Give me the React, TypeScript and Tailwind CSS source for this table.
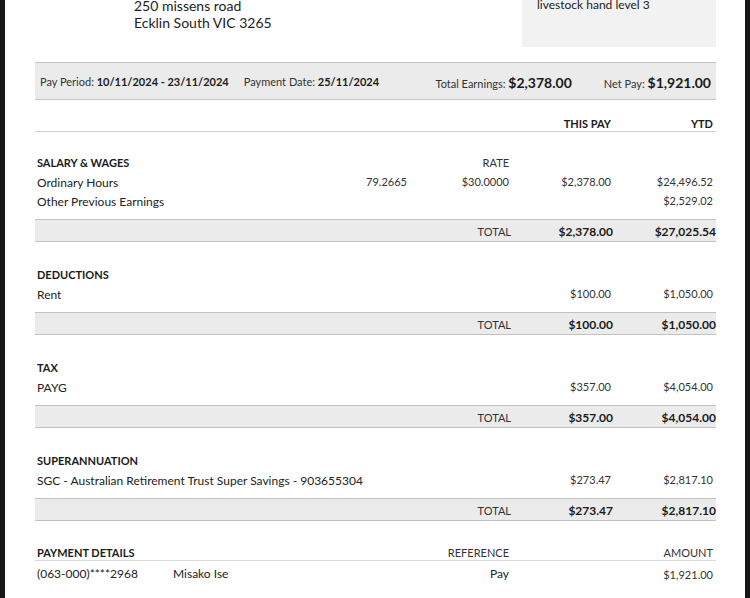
import React from "react";

const F = { fontFamily: "Lato, 'Noto Sans', sans-serif" };

type Item = { label: string; hours?: string; rate?: string; pay?: string; ytd?: string };

const COLS = "grid grid-cols-[minmax(0,1fr)_102px_102px_102px_102px] pl-[2px] pr-[3px]";

function Row({ item }: { item: Item }) {
  return (
    <div className={`${COLS} h-[19px] items-center`}>
      <div className="text-[12px] text-[#222] whitespace-nowrap">{item.label}</div>
      <div className="text-right text-[11px] text-[#333]">{item.hours ?? ""}</div>
      <div className="text-right text-[11px] text-[#333]">{item.rate ?? ""}</div>
      <div className="text-right text-[11px] text-[#333]">{item.pay ?? ""}</div>
      <div className="text-right text-[11px] text-[#333]">{item.ytd ?? ""}</div>
    </div>
  );
}

function Section({
  title,
  rate,
  items,
  totalPay,
  totalYtd,
  first,
}: {
  title: string;
  rate?: string;
  items: Item[];
  totalPay: string;
  totalYtd: string;
  first?: boolean;
}) {
  return (
    <div className={first ? "pt-[22px]" : "pt-[24px]"}>
      <div className={`${COLS} h-[19px] items-center`}>
        <div className="text-[11px] font-bold text-[#1a1a1a]">{title}</div>
        <div />
        <div className="text-right text-[11px] text-[#333]">{rate ?? ""}</div>
        <div />
        <div />
      </div>
      {items.map((it, i) => (
        <Row key={i} item={it} />
      ))}
      <div className="h-[8px]" />
      <div className="grid grid-cols-[minmax(0,1fr)_102px_102px_103px] h-[23px] items-center pl-[2px] bg-[#ebebeb] border-y border-[#c2c2c2]">
        <div />
        <div className="text-right text-[11px] text-[#333] pt-[3px]">TOTAL</div>
        <div className="text-right text-[12px] font-bold text-[#1a1a1a] pt-[3px]">{totalPay}</div>
        <div className="text-right text-[12px] font-bold text-[#1a1a1a] pt-[3px]">{totalYtd}</div>
      </div>
    </div>
  );
}

export default function App() {
  return (
    <div className="w-[750px] h-[598px] bg-[#161616] flex pl-[5px] pr-[5px] overflow-hidden" style={F}>
      <div className="flex-1 bg-white overflow-hidden">
        <div className="pl-[30px] pr-[29px]">
          {/* header */}
          <div className="h-[62px] flex items-start">
            <div className="ml-[99px] -mt-[3px] text-[14px] leading-[17px] text-[#222]">
              <div>250 missens road</div>
              <div>Ecklin South VIC 3265</div>
            </div>
            <div className="ml-auto w-[194px] h-[60px] -mt-[13px] bg-[#f2f2f2] pl-[15px] pt-[10px] text-[12px] leading-[16px] text-[#222]">
              livestock hand level 3
            </div>
          </div>

          {/* pay bar */}
          <div className="h-[38px] bg-[#ebebeb] border-y border-[#c4c4c4] flex items-center pl-[5px] pr-[5px] pt-[2px] text-[#222]">
            <div className="text-[11px] text-[#333]">
              Pay Period: <span className="text-[11px] font-bold text-[#1a1a1a]">10/11/2024 - 23/11/2024</span>
            </div>
            <div className="ml-[15px] text-[11px] text-[#333]">
              Payment Date: <span className="text-[11px] font-bold text-[#1a1a1a]">25/11/2024</span>
            </div>
            <div className="ml-auto text-[11px] text-[#333]">
              Total Earnings: <span className="text-[14px] font-bold text-[#1a1a1a]">$2,378.00</span>
            </div>
            <div className="ml-[32px] text-[11px] text-[#333]">
              Net Pay: <span className="text-[14px] font-bold text-[#1a1a1a]">$1,921.00</span>
            </div>
          </div>

          {/* column header */}
          <div className={`${COLS} h-[32px] border-b border-[#cfcfcf] items-end`}>
            <div />
            <div />
            <div />
            <div className="text-right text-[11px] leading-[14px] font-bold text-[#1a1a1a]">THIS PAY</div>
            <div className="text-right text-[11px] leading-[14px] font-bold text-[#1a1a1a]">YTD</div>
          </div>

          <Section
            first
            title="SALARY & WAGES"
            rate="RATE"
            items={[
              { label: "Ordinary Hours", hours: "79.2665", rate: "$30.0000", pay: "$2,378.00", ytd: "$24,496.52" },
              { label: "Other Previous Earnings", ytd: "$2,529.02" },
            ]}
            totalPay="$2,378.00"
            totalYtd="$27,025.54"
          />
          <Section
            title="DEDUCTIONS"
            items={[{ label: "Rent", pay: "$100.00", ytd: "$1,050.00" }]}
            totalPay="$100.00"
            totalYtd="$1,050.00"
          />
          <Section
            title="TAX"
            items={[{ label: "PAYG", pay: "$357.00", ytd: "$4,054.00" }]}
            totalPay="$357.00"
            totalYtd="$4,054.00"
          />
          <Section
            title="SUPERANNUATION"
            items={[{ label: "SGC - Australian Retirement Trust Super Savings - 903655304", pay: "$273.47", ytd: "$2,817.10" }]}
            totalPay="$273.47"
            totalYtd="$2,817.10"
          />

          {/* payment details */}
          <div className="pt-[24px]">
            <div className={`${COLS} h-[16px] items-center border-b border-[#dadada]`}>
              <div className="text-[11px] font-bold text-[#1a1a1a]">PAYMENT DETAILS</div>
              <div />
              <div className="text-right text-[11px] text-[#333]">REFERENCE</div>
              <div />
              <div className="text-right text-[11px] text-[#333]">AMOUNT</div>
            </div>
            <div className={`${COLS} h-[22px] items-end`}>
              <div className="flex text-[12px] text-[#222]">
                <span className="w-[136px]">(063-000)****2968</span>
                <span>Misako Ise</span>
              </div>
              <div />
              <div className="text-right text-[12px] text-[#222]">Pay</div>
              <div />
              <div className="text-right text-[11px] text-[#333]">$1,921.00</div>
            </div>
          </div>
        </div>
      </div>
    </div>
  );
}
